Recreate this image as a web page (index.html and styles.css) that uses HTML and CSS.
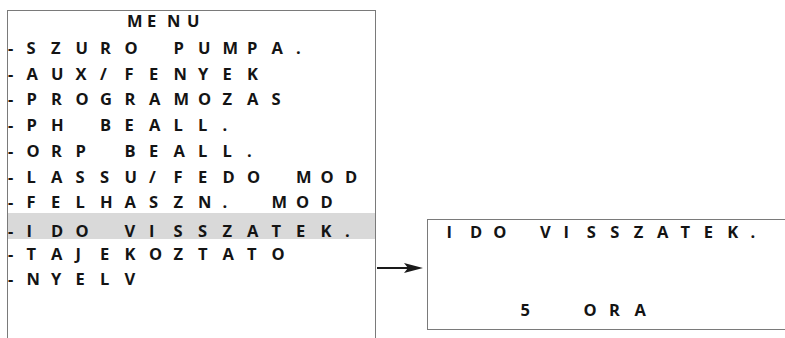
FILE: index.html
```html
<!DOCTYPE html>
<html lang="hu">
<head>
    <meta charset="UTF-8" />
    <meta name="viewport" content="width=device-width, initial-scale=1.0" />
    <title>Menu - Ido visszatek.</title>
    <link rel="stylesheet" href="styles.css">
</head>
<body>
    <!-- display: each character sits in its own cell, like the LCD -->
    <div class="screen menu">
        <div class="title"><span>M</span><span>E</span><span>N</span><span>U</span></div>
        <div class="row"><span class="dash">-</span><span>S</span><span>Z</span><span>U</span><span>R</span><span>O</span><span class="gap"></span><span>P</span><span>U</span><span>M</span><span>P</span><span>A</span><span>.</span></div>
        <div class="row"><span class="dash">-</span><span>A</span><span>U</span><span>X</span><span>/</span><span>F</span><span>E</span><span>N</span><span>Y</span><span>E</span><span>K</span></div>
        <div class="row"><span class="dash">-</span><span>P</span><span>R</span><span>O</span><span>G</span><span>R</span><span>A</span><span>M</span><span>O</span><span>Z</span><span>A</span><span>S</span></div>
        <div class="row"><span class="dash">-</span><span>P</span><span>H</span><span class="gap"></span><span>B</span><span>E</span><span>A</span><span>L</span><span>L</span><span>.</span></div>
        <div class="row"><span class="dash">-</span><span>O</span><span>R</span><span>P</span><span class="gap"></span><span>B</span><span>E</span><span>A</span><span>L</span><span>L</span><span>.</span></div>
        <div class="row"><span class="dash">-</span><span>L</span><span>A</span><span>S</span><span>S</span><span>U</span><span>/</span><span>F</span><span>E</span><span>D</span><span>O</span><span class="gap"></span><span>M</span><span>O</span><span>D</span></div>
        <div class="row"><span class="dash">-</span><span>F</span><span>E</span><span>L</span><span>H</span><span>A</span><span>S</span><span>Z</span><span>N</span><span>.</span><span class="gap"></span><span>M</span><span>O</span><span>D</span></div>
        <div class="row selected"><span class="dash">-</span><span>I</span><span>D</span><span>O</span><span class="gap"></span><span>V</span><span>I</span><span>S</span><span>S</span><span>Z</span><span>A</span><span>T</span><span>E</span><span>K</span><span>.</span></div>
        <div class="row"><span class="dash">-</span><span>T</span><span>A</span><span>J</span><span>E</span><span>K</span><span>O</span><span>Z</span><span>T</span><span>A</span><span>T</span><span>O</span></div>
        <div class="row"><span class="dash">-</span><span>N</span><span>Y</span><span>E</span><span>L</span><span>V</span></div>
    </div>

    <svg class="arrow" width="46" height="12" viewBox="0 0 46 12">
        <line x1="0" y1="6" x2="32" y2="6" stroke="#1a1a1a" stroke-width="2" />
        <polygon points="27,1 46,6 27,11 31,6" fill="#1a1a1a" />
    </svg>

    <div class="screen detail">
        <div class="row"><span>I</span><span>D</span><span>O</span><span class="gap"></span><span>V</span><span>I</span><span>S</span><span>S</span><span>Z</span><span>A</span><span>T</span><span>E</span><span>K</span><span>.</span></div>
        <div class="row value"><span class="number">5</span><span>O</span><span>R</span><span>A</span></div>
    </div>
</body>
</html>
```

FILE: styles.css
```css
body {
    margin: 0;
    display: flex;
    align-items: flex-start;
    height: 338px;
    overflow: hidden;
    background: #ffffff;
    font-family: "Open Sans", Arial, sans-serif;
    font-weight: 700;
    font-size: 16.5px;
    color: #141414;
}
.screen {
    border: 1.5px solid #7a7a7a;
    flex-shrink: 0;
}
.menu {
    margin: 10px 0 0 7px;
    width: 367px;
    height: 340px;
    border-bottom: none;
}
.title, .row {
    display: grid;
    grid-auto-flow: column;
    justify-content: start;
}
.title {
    grid-auto-columns: 20px;
    line-height: 20px;
    margin-bottom: 4px;
    padding-left: 119px;
}
.row {
    grid-auto-columns: 24.5px;
    line-height: 25.7px;
}
.dash {
    width: 18.5px;
}
.menu .row {
    grid-template-columns: 18.5px;
}
.selected {
    background: #d9d9d9;
    margin: -2.4px 0 2.1px;
    padding-top: 10px;
    line-height: 16px;
}
.arrow {
    margin: 262px 4px 0 1px;
    flex-shrink: 0;
}
.detail {
    margin-top: 219px;
    height: 109px;
    width: 400px;
    border-right: none;
    padding-left: 18.5px;
    display: flex;
    flex-direction: column;
    justify-content: space-between;
}
.detail .row {
    grid-auto-columns: 23.4px;
    line-height: 24px;
}
.detail .value {
    grid-template-columns: 63px;
    grid-auto-columns: 25.5px;
    padding-left: 74px;
    margin-bottom: 7px;
}
```
